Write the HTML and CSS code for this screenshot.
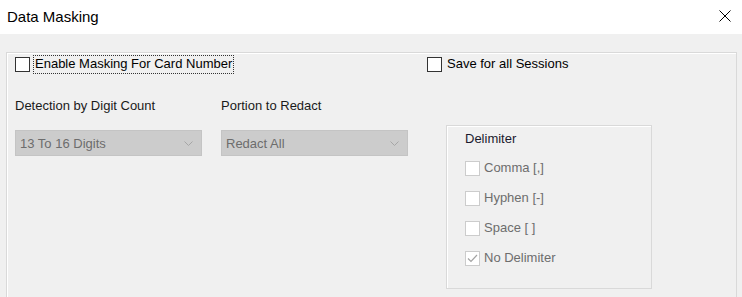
FILE: index.html
```html
<!DOCTYPE html>
<html lang="en">
<head>
    <meta charset="UTF-8">
    <title>Data Masking</title>
    <link rel="stylesheet" href="styles.css">
</head>
<body>

    <div class="title-bar">
        <span class="title">Data Masking</span>
        <svg class="close" width="12" height="12" viewBox="0 0 12 12">
            <path d="M0.5 0.5 L11.5 11.5 M11.5 0.5 L0.5 11.5" stroke="#000" stroke-width="1" fill="none"/>
        </svg>
    </div>

    <div class="panel">
        <div class="top-row">
            <div class="option first">
                <span class="check"></span>
                <span class="label focused">Enable Masking For Card Number</span>
            </div>
            <div class="option">
                <span class="check"></span>
                <span class="label">Save for all Sessions</span>
            </div>
        </div>

        <div class="settings-row">
            <div class="selects">
                <div class="field-label">Detection by Digit Count</div>
                <div class="field-label">Portion to Redact</div>
                <div class="combo">
                    <span>13 To 16 Digits</span>
                    <svg width="9" height="5" viewBox="0 0 9 5"><polyline points="0.5,0.5 4.5,4.5 8.5,0.5" stroke="#a6a6a6" fill="none"/></svg>
                </div>
                <div class="combo">
                    <span>Redact All</span>
                    <svg width="9" height="5" viewBox="0 0 9 5"><polyline points="0.5,0.5 4.5,4.5 8.5,0.5" stroke="#a6a6a6" fill="none"/></svg>
                </div>
            </div>

            <div class="group">
                <div class="group-title">Delimiter</div>
                <div class="option disabled">
                    <span class="check"></span>
                    <span class="label">Comma [,]</span>
                </div>
                <div class="option disabled">
                    <span class="check"></span>
                    <span class="label">Hyphen [-]</span>
                </div>
                <div class="option disabled">
                    <span class="check"></span>
                    <span class="label">Space [ ]</span>
                </div>
                <div class="option disabled">
                    <span class="check">
                        <svg width="13" height="13" viewBox="0 0 13 13"><polyline points="2,6.5 5,9.5 11,3" stroke="#a3a3a3" stroke-width="1.2" fill="none"/></svg>
                    </span>
                    <span class="label">No Delimiter</span>
                </div>
            </div>
        </div>
    </div>

</body>
</html>
```

FILE: styles.css
```css
* {
    box-sizing: border-box;
}

body {
    margin: 0;
    height: 297px;
    overflow: hidden;
    background-color: #f0f0f0;
    font-family: 'Liberation Sans', Arial, sans-serif;
    font-size: 13px;
    line-height: 15px;
    color: #000;
}

.title-bar {
    height: 34px;
    background: #fff;
    display: flex;
    align-items: center;
    justify-content: space-between;
    padding: 0 11px 0 7px;
}

.title {
    font-size: 15px;
    margin-top: -1px;
}

.close {
    margin-top: -2px;
}

/* groupbox principal */
.panel {
    margin: 18px 5px 0 6px;
    height: 250px;
    border: 1px solid #d9d9d9;
    border-bottom: none;
    box-shadow: inset 1px 1px 0 #fff;
    padding: 2px 0 0 8px;
}

.top-row {
    display: flex;
}

.option {
    display: flex;
    align-items: center;
}

.option.first {
    width: 412px;
}

.check {
    width: 15px;
    height: 15px;
    border: 1px solid #333;
    background: #fff;
    margin-right: 3px;
    display: flex;
}

.label {
    padding: 0 1px 2px;
    border: 1px solid transparent;
}

.label.focused {
    border: 1px dotted #333;
}

.settings-row {
    display: flex;
    align-items: flex-start;
    margin-top: 24px;
}

.selects {
    display: grid;
    grid-template-columns: 187px 187px;
    column-gap: 19px;
    row-gap: 17px;
}

.field-label {
    color: #1a1a1a;
}

.combo {
    height: 26px;
    border: 1px solid #c4c4c4;
    background: #cccccc;
    color: #6d6d6d;
    display: flex;
    align-items: center;
    justify-content: space-between;
    padding: 0 8px 0 4px;
}

.combo span {
    margin-top: 1px;
}

.combo svg {
    margin-top: 1px;
}

.group {
    margin: 27px 0 0 38px;
    width: 206px;
    height: 164px;
    border: 1px solid #d9d9d9;
    box-shadow: inset 1px 1px 0 #fff;
    padding: 5px 0 0 18px;
    display: flex;
    flex-direction: column;
    gap: 11px;
}

.group-title {
    color: #1a1a2e;
    margin-bottom: 2px;
}

.option.disabled {
    color: #6d6d6d;
}

.option.disabled .check {
    border-color: #cccccc;
    margin-right: 2px;
}
```
